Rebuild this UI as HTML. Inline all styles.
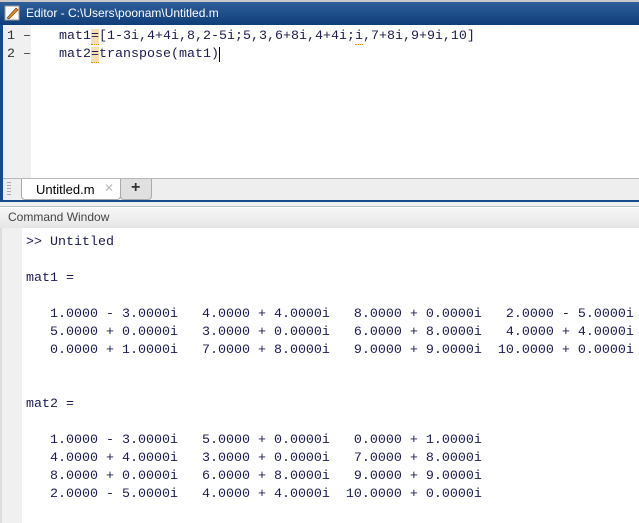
<!DOCTYPE html>
<html><head><style>
*{margin:0;padding:0;box-sizing:border-box}
body{width:639px;height:523px;overflow:hidden;background:#fff;position:relative;font-family:"Liberation Sans",sans-serif}
.mono{font-family:"Liberation Mono",monospace;font-size:13.33px;white-space:pre;position:absolute;line-height:18px}
#title{position:absolute;left:0;top:0;width:639px;height:25px;border-top:2px solid #c8c8c8;background:linear-gradient(#2f5f9a,#0e3d78);color:#fff;font-size:12px}
#title span{position:absolute;left:26px;top:4px}
#edl{position:absolute;left:0;top:25px;width:3px;height:177px;background:#174a8a}
#gut{position:absolute;left:3px;top:25px;width:28px;height:153px;background:#f0f0f0}
#tabbar{position:absolute;left:3px;top:178px;width:636px;height:22px;background:#eeeeee;border-top:1px solid #b8b8b8}
#blue{position:absolute;left:0;top:200px;width:639px;height:2px;background:#174a8a}
#gap{position:absolute;left:0;top:202px;width:639px;height:5px;background:#f0f0f0;border-bottom:1px solid #c0c0c0}
#cwh{position:absolute;left:0;top:208px;width:639px;height:20px;background:linear-gradient(#f6f6f6,#e6e6e6);font-size:12px;color:#444}
#cwh span{position:absolute;left:8px;top:2px}
#cwg{position:absolute;left:0;top:228px;width:22px;height:295px;background:#f0f0f0;border-left:2px solid #ddd}
.tab{position:absolute;top:0;height:21px;background:#fff;border:1px solid #aaa;border-top:none;border-radius:0 0 4px 4px;font-size:12px}
.eq{background:#f3dfb0;border-bottom:1px dotted #e08a00}
.c{color:#1c1c50}
</style></head><body>
<div id="title">
<svg style="position:absolute;left:4px;top:3px" width="16" height="16"><rect x="1" y="1" width="14" height="14" fill="#fff" stroke="#999"/><path d="M3 13 L12 3 L14 5 L5 14 Z" fill="#e08a2a" stroke="#7a4a10" stroke-width=".7"/></svg>
<span>Editor - C:\Users\poonam\Untitled.m</span></div>
<div id="edl"></div><div id="gut"></div>
<div class="mono c" style="left:7px;top:28px;color:#333">1 –
2 –</div>
<div class="mono c" style="left:59px;top:28px">mat1<span class="eq">=</span>[1-3i,4+4i,8,2-5i;5,3,6+8i,4+4i;<span style="border-bottom:1px dotted #e08a00">i</span>,7+8i,9+9i,10]
mat2<span class="eq">=</span>transpose(mat1)<span style="border-left:1px solid #000"> </span></div>
<div id="tabbar">
<div style="position:absolute;left:4px;top:3px;width:4px;height:15px;background:repeating-linear-gradient(#aaa 0 1px,transparent 1px 3px)"></div>
<div class="tab" style="left:18px;width:100px"><span style="position:absolute;left:14px;top:3px;font-size:13px">Untitled.m</span><span style="position:absolute;left:82px;top:2px;color:#bbb">✕</span></div>
<div class="tab" style="left:117px;width:32px;background:#e0e0e0"><span style="position:absolute;left:10px;top:0px;font-size:16px;font-weight:bold;color:#333">+</span></div>
</div>
<div id="blue"></div><div id="gap"></div>
<div id="cwh"><span>Command Window</span></div>
<div id="cwg"></div>
<div class="mono c" style="left:26px;top:234px">&gt;&gt; Untitled

mat1 =

   1.0000 - 3.0000i   4.0000 + 4.0000i   8.0000 + 0.0000i   2.0000 - 5.0000i
   5.0000 + 0.0000i   3.0000 + 0.0000i   6.0000 + 8.0000i   4.0000 + 4.0000i
   0.0000 + 1.0000i   7.0000 + 8.0000i   9.0000 + 9.0000i  10.0000 + 0.0000i


mat2 =

   1.0000 - 3.0000i   5.0000 + 0.0000i   0.0000 + 1.0000i
   4.0000 + 4.0000i   3.0000 + 0.0000i   7.0000 + 8.0000i
   8.0000 + 0.0000i   6.0000 + 8.0000i   9.0000 + 9.0000i
   2.0000 - 5.0000i   4.0000 + 4.0000i  10.0000 + 0.0000i</div>
</body></html>
